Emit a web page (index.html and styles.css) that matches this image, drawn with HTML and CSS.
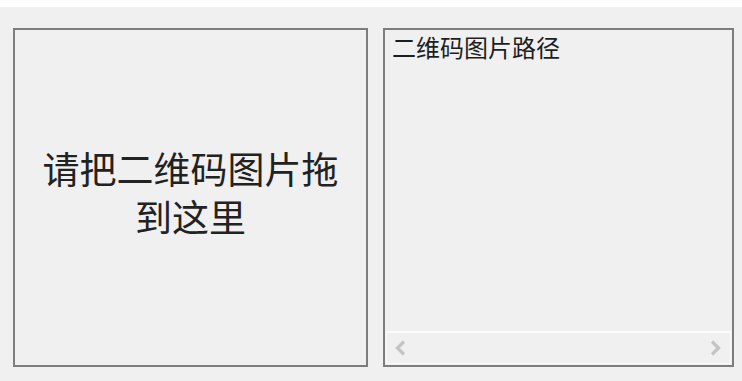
FILE: index.html
```html
<!DOCTYPE html>
<html lang="zh-CN">
<head>
<meta charset="utf-8">
<title>二维码</title>
<link rel="stylesheet" href="styles.css">
</head>
<body>
<div class="topbar"></div>
<div class="main">
  <div class="drop">
    <div class="drop-text">请把二维码图片拖到这里</div>
  </div>
  <div class="list">
    <div class="list-body">二维码图片路径</div>
    <div class="hscroll">
      <svg class="arrow" width="14" height="16" viewBox="0 0 14 16"><polyline points="10,1.5 3.5,8 10,14.5" fill="none" stroke="#c4c4c4" stroke-width="3.2"/></svg>
      <svg class="arrow" width="14" height="16" viewBox="0 0 14 16"><polyline points="4,1.5 10.5,8 4,14.5" fill="none" stroke="#c4c4c4" stroke-width="3.2"/></svg>
    </div>
  </div>
</div>
</body>
</html>
```

FILE: styles.css
```css
html, body {
  margin: 0;
  padding: 0;
}
body {
  background: #f0f0f0;
  font-family: "Noto Sans CJK SC", "Microsoft YaHei", sans-serif;
  color: #1e1e1e;
  overflow: hidden;
  width: 742px;
  height: 381px;
}
.topbar {
  height: 7px;
  background: #ffffff;
}
.main {
  display: flex;
  gap: 15px;
  padding: 21px 0 0 13px;
}
.drop {
  box-sizing: border-box;
  width: 355px;
  height: 339px;
  border: 2px solid #7d7d7d;
  display: flex;
  align-items: center;
  justify-content: center;
  padding-bottom: 12px;
}
.drop-text {
  width: 310px;
  text-align: center;
  font-size: 37px;
  line-height: 48px;
  color: #222;
}
.list {
  box-sizing: border-box;
  width: 351px;
  height: 339px;
  border: 2px solid #7d7d7d;
  display: flex;
  flex-direction: column;
}
.list-body {
  flex: 1;
  padding: 2px 0 0 7px;
  font-size: 24px;
  line-height: 29px;
  color: #1e1e1e;
}
.hscroll {
  box-sizing: border-box;
  height: 33px;
  margin: 0 1px 1px 1px;
  border: 1px solid #fafafa;
  border-top: 2px solid #fbfbfb;
  display: flex;
  align-items: center;
  justify-content: space-between;
  padding: 0 8px 0 7px;
}
.arrow {
  display: block;
}
```
